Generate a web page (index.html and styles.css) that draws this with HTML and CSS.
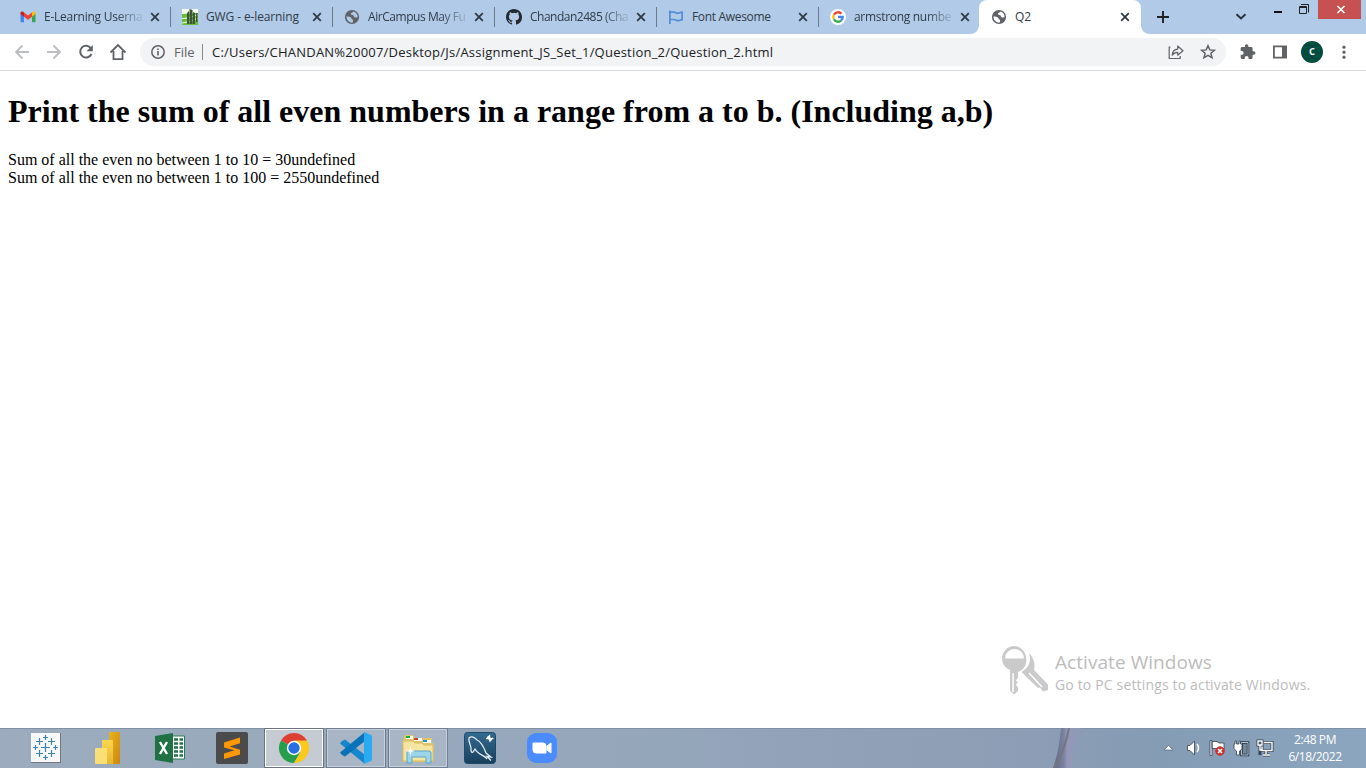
FILE: index.html
```html
<!DOCTYPE html>
<html lang="en">
<head>
<meta charset="utf-8">
<title>Q2</title>
<link rel="stylesheet" href="styles.css">
</head>
<body>
<svg class="defs" width="0" height="0">
  <symbol id="close" viewBox="0 0 10 10"><path d="M1.2 1.2l7.6 7.6M8.8 1.2L1.2 8.8" stroke="#303a45" stroke-width="1.8" fill="none"/></symbol>
  <symbol id="globe" viewBox="0 0 16 16"><circle cx="8" cy="8" r="7.1" fill="#5f6368"/><path d="M2.4 7.6c2 .2 3.600.1 4.500.9s.3 1.800 1.600 2.100c.8.2.7 1.600.2 3C5.200 14 2.600 11.300 2.400 7.600zM9.300 2.500C8.800 3.900 7 3.500 6.800 4.800 6.600 6 8.600 5.700 9.500 6.600c.7.8.3 1.900 1.700 2 1 .1 1.600-.5 2.400-.4C13.800 5.400 12 3.200 9.300 2.500z" fill="currentColor"/></symbol>
</svg>
<header class="tabstrip">
  <div class="tab">
    <svg class="fav" viewBox="0 0 16 16"><path d="M.5 4v8.300c0 .6.4 1 1 1H4V6.500z" fill="#4285f4"/><path d="M12 6.500v6.800h2.500c.6 0 1-.4 1-1V4z" fill="#34a853"/><path d="M12 3.500v4.200l3.500-2.600V4c0-1.500-1.600-2-2.600-1.200z" fill="#fbbc04"/><path d="M4 7.700V3.500l4 3 4-3v4.200l-4 3z" fill="#ea4335"/><path d="M.5 4v1.100L4 7.700V3.500l-.9-.7C2 2 .5 2.600.5 4z" fill="#c5221f"/></svg>
    <span class="title fade t1">E-Learning Userna</span><svg class="x"><use href="#close"/></svg>
  </div>
  <div class="tab">
    <svg class="fav" viewBox="0 0 16 16"><path d="M0 0h16v16H0z" fill="#f5faf0"/><path d="M0 5l16-1v12H0z" fill="#69bd3c"/><path d="M0 9.500c6 0 11-2 16-4M0 14c6-1 11-2 16-5" stroke="#e4f6d8" stroke-width="1.200" fill="none"/><path d="M5 4l2-2v13H5zM7.500 0l3 1v14h-3zM11 3l2 1v11h-2zM14 4h1.500v9H14z" fill="#3c5637"/></svg>
    <span class="title t2">GWG - e-learning</span><svg class="x"><use href="#close"/></svg>
  </div>
  <div class="tab"><svg class="fav"><use href="#globe"/></svg><span class="title fade t3">AirCampus May Fu</span><svg class="x"><use href="#close"/></svg></div>
  <div class="tab">
    <svg class="fav" viewBox="0 0 16 16"><path fill="#24292f" d="M8 0C3.580 0 0 3.580 0 8c0 3.540 2.290 6.530 5.470 7.590.4.070.550-.170.550-.380 0-.190-.010-.820-.010-1.490-2.010.370-2.530-.490-2.690-.940-.090-.230-.480-.940-.820-1.130-.280-.150-.680-.520-.010-.530.630-.010 1.080.580 1.230.820.720 1.210 1.870.870 2.330.660.070-.520.280-.870.510-1.070-1.780-.200-3.640-.890-3.640-3.950 0-.870.310-1.590.820-2.150-.080-.200-.360-1.020.080-2.120 0 0 .670-.210 2.200.820a7.600 7.600 0 0 1 4 0c1.530-1.040 2.200-.820 2.200-.820.440 1.100.160 1.920.080 2.120.510.560.820 1.270.820 2.150 0 3.070-1.870 3.750-3.650 3.950.290.250.540.730.540 1.480 0 1.070-.010 1.930-.010 2.200 0 .210.150.460.550.380A8.010 8.010 0 0 0 16 8c0-4.420-3.580-8-8-8z"/></svg>
    <span class="title fade t4">Chandan2485 (Cha</span><svg class="x"><use href="#close"/></svg>
  </div>
  <div class="tab"><svg class="fav" viewBox="0 0 16 16"><path d="M1.900 1.500v13.500M2 3.200h4.200c1.500 0 1.800 1.200 3.500 1.200 1.600 0 2.500-1.200 4.400-1.200v7.500c-1.700.1-2.700 1-4.400 1S7.500 10.500 6 10.500H2" fill="none" stroke="#538dd7" stroke-width="1.700"/></svg><span class="title t5">Font Awesome</span><svg class="x"><use href="#close"/></svg></div>
  <div class="tab last">
    <svg class="fav" viewBox="0 0 16 16"><circle cx="8" cy="8" r="8" fill="#fff"/><g fill="none" stroke-width="2.300"><path d="M3.900 5.800A4.700 4.700 0 0 1 11.400 4.600" stroke="#ea4335"/><path d="M3.900 5.800a4.700 4.700 0 0 0 0 4.400" stroke="#fbbc05"/><path d="M3.900 10.200a4.700 4.700 0 0 0 7.200 1.400" stroke="#34a853"/><path d="M11.100 11.600A4.700 4.700 0 0 0 12.700 8H8" stroke="#4285f4"/></g></svg>
    <span class="title fade t6">armstrong numbe</span><svg class="x"><use href="#close"/></svg>
  </div>
  <div class="tab active"><svg class="fav"><use href="#globe"/></svg><span class="title">Q2</span><svg class="x"><use href="#close"/></svg></div>
  <svg class="newtab" viewBox="0 0 12 12"><path d="M6 0v12M0 6h12" stroke="#202124" stroke-width="1.900"/></svg>
  <div class="winctl">
    <svg width="126" height="20" viewBox="0 0 126 20"><path d="M1.500 14.300L6 18.500l4.500-4.200" fill="none" stroke="#26313c" stroke-width="1.900"/><path d="M39 12h8" stroke="#111" stroke-width="2"/><path d="M66 4.500h7.500v8" fill="none" stroke="#222"/><path d="M64.500 6.500h7v7h-7zM64 7.500h8" fill="none" stroke="#222"/><path d="M83 0h45v19H83z" fill="#c75050"/><path d="M102.500 6l7 7M109.500 6l-7 7" stroke="#fff" stroke-width="1.600"/></svg>
  </div>
</header>
<nav class="toolbar">
  <svg class="navicons" width="126" height="36" viewBox="0 0 126 36"><g fill="none" stroke-width="1.800"><path d="M29 18H16M22.500 11.500L16 18l6.500 6.500M47 18h13M53.500 11.500L60 18l-6.500 6.500" stroke="#bbbdc0"/><path d="M91 14.300A5.900 5.900 0 1 0 91.500 20" stroke="#5f6368" stroke-width="2"/><path d="M110.500 18.500L118 11l7.500 7.500M113.500 17v8.200h9V17" stroke="#5f6368"/></g><path d="M92.800 11v6.300h-6.300z" fill="#5f6368"/></svg>
  <div class="omnibox">
    <svg width="14" height="14" viewBox="0 0 14 14"><circle cx="7" cy="7" r="6.200" fill="none" stroke="#5f6368" stroke-width="1.500"/><path d="M7 6v4.500M7 3.500v1.500" stroke="#5f6368" stroke-width="1.600"/></svg>
    <span class="file">File</span><span class="rule"></span><span class="url">C:/Users/CHANDAN%20007/Desktop/Js/Assignment_JS_Set_1/Question_2/Question_2.html</span>
    <svg class="share" width="50" height="18" viewBox="0 0 50 18"><path d="M2.500 4H1.200v11.500h11V13" fill="none" stroke="#5f6368" stroke-width="1.200"/><path d="M9.700 6.200V3L15 7.700l-5.300 4.500V9.300C7.500 9.200 5.600 10 4.200 12.200 4.500 8.800 6.200 6.500 9.700 6.200z" fill="none" stroke="#5f6368" stroke-width="1.200" stroke-linejoin="round"/><path d="M40 2.700l1.800 4.200 4.600.4-3.500 3 1.100 4.500-4-2.400-4 2.400 1.100-4.500-3.500-3 4.600-.4z" fill="none" stroke="#5f6368" stroke-width="1.500"/></svg>
  </div>
  <svg class="ext" width="50" height="18" viewBox="0 0 50 18"><path transform="translate(-.7 .5) scale(.7)" fill="#5f6368" d="M20.500 11H19V7c0-1.100-.9-2-2-2h-4V3.500a2.500 2.500 0 0 0-5 0V5H4c-1.100 0-2 .9-2 2v3.800h1.500a2.700 2.700 0 0 1 0 5.400H2V20c0 1.100.9 2 2 2h3.800v-1.500a2.700 2.700 0 0 1 5.400 0V22H17c1.100 0 2-.9 2-2v-4h1.500a2.500 2.500 0 0 0 0-5z"/><path d="M33.900 3.400h12.200v11.200H33.900z" fill="none" stroke="#5f6368" stroke-width="1.800"/><path d="M42 3h4v12h-4z" fill="#5f6368"/></svg>
  <span class="avatar">c</span>
  <svg width="4" height="16" viewBox="0 0 4 16"><g fill="#5f6368"><circle cx="2" cy="3.200" r="1.600"/><circle cx="2" cy="8.200" r="1.600"/><circle cx="2" cy="13.200" r="1.600"/></g></svg>
</nav>
<main class="page">
  <h1 class="question">Print the sum of all even numbers in a range from a to b. (Including a,b)</h1>
  <div class="r1">Sum of all the even no between 1 to 10 = 30undefined</div>
  <div class="r2">Sum of all the even no between 1 to 100 = 2550undefined</div>
  <aside class="watermark">
    <svg width="48" height="50" viewBox="0 0 48 50"><g fill="#cacaca"><path d="M27 7c5 5 6.500 11 5 17L46 38.500V44l-5 1.500-3-4-2 .5-15-14.500q-2-1-1-2.500c5.500-2 8-7 8-12.500z"/><path stroke="#fff" stroke-width="1.500" d="M12.500-.7C5-.7-.7 5.200-.7 12.500c0 5.500 3.200 10 8 12V45l5 4.500 4.500-4.500v-4l-2-2 2-2.500-2-2 2-2.500v-5.500c5-2 8.300-6.500 8.300-12C25.100 5.200 19.500-.7 12.500-.7z"/></g><path d="M3 12.500a9.300 9.300 0 0 1 19 0zM10.300 27h1.500v19h-1.500z" fill="#fff"/><path d="M27 27l13 14" stroke="#fff" stroke-width="1.500"/></svg>
    <div><div class="wt">Activate Windows</div><div class="ws">Go to PC settings to activate Windows.</div></div>
  </aside>
</main>
<footer class="taskbar">
  <div class="app"><svg viewBox="0 0 32 32"><path d="M1 1h30v30H1z" fill="#70777e"/><path d="M1 1h29v29H1z" fill="#f8f8f8"/><path d="M15.500 11v9M11 15.500h9M9.500 6v7M6 9.500h7M21.500 6v7M18 9.500h7M9.500 18v7M6 21.500h7M21.500 18v7M18 21.500h7M15.500 3v5M13 5.500h5M15.500 23v5M13 25.500h5M5.500 13v5M3 15.500h5M25.500 13v5M23 15.500h5" stroke="#3f82ad" stroke-width="1.200"/></svg></div>
  <div class="app"><svg viewBox="0 0 32 32"><defs><linearGradient id="pb" x2="1" y2="1"><stop stop-color="#e9b51f"/><stop offset="1" stop-color="#cc840d"/></linearGradient><linearGradient id="pb2" x2="0" y2="1"><stop stop-color="#f8d64d"/><stop offset="1" stop-color="#e7b62d"/></linearGradient></defs><rect x="17" width="11" height="32" rx="1" fill="url(#pb)"/><path d="M11 8h9q1 0 1 1v23H10V9q0-1 1-1z" fill="url(#pb2)"/><path d="M4 16h10q1 0 1 1v15H4q-1 0-1-1V17q0-1 1-1z" fill="#f9df75"/></svg></div>
  <div class="app"><svg viewBox="0 0 32 32"><path d="M18 4h12.500v23H18z" fill="#fff" stroke="#247c50"/><path d="M20 7.500h4M20 11.500h4M20 15.500h4M20 19.500h4M20 23.500h4M25.500 7.500H29M25.500 11.500H29M25.500 15.500H29M25.500 19.500H29M25.500 23.500H29" stroke="#217346" stroke-width="2.500"/><path d="M1 4l18-3v30L1 28z" fill="#207245"/><path d="M6 10l7 12M13 10L6 22" stroke="#fff" stroke-width="2.400"/></svg></div>
  <div class="app"><svg viewBox="0 0 32 32"><rect width="32" height="32" rx="2" fill="#4b4b4b"/><path d="M8 10.500l16-5v5.700L13.500 14.500 24 17.700v4.800L8 27v-5.500l10.500-3.200L8 15.500z" fill="#ff9800"/></svg></div>
  <div class="app open current"><svg viewBox="0 0 32 32"><path d="M16 16L3 8.500A15 15 0 0 1 29 8.500z" fill="#df4034"/><path d="M16 16L3 8.500A15 15 0 0 0 16 31l6.500-11z" fill="#269e4b"/><path d="M16 16l6.500 4L16 31A15 15 0 0 0 29 8.500H16z" fill="#fbc91b"/><circle cx="16" cy="16" r="7.200" fill="#fff"/><circle cx="16" cy="16" r="5.700" fill="#276fe0"/></svg></div>
  <div class="app open"><svg viewBox="0 0 32 32"><path d="M2 9l3-1.500L25 23v9L0 11.500z" fill="#1686ce"/><path d="M2 23l3 1.500L25 9V0L0 20.500z" fill="#0873b8"/><path d="M24 0l8 3.500v25L24 32z" fill="#2aaaf0"/></svg></div>
  <div class="app open"><svg viewBox="0 0 32 32"><path d="M1 8l2-5h8l2 3h17v5l2 1-1 18H1z" fill="#e3c56a"/><path d="M4 4h7v3H4zM12 6h8v3h-8zM21 8h8v3h-8z" fill="#fff"/><path d="M4 4h4v2H4z" fill="#17af32"/><path d="M12 6h4v2h-4z" fill="#d24325"/><path d="M21 8h4v2h-4z" fill="#2693df"/><path d="M1 9h10l2 2h7l2 2h9v16H1z" fill="#f6e5a0" stroke="#d7bc65"/><path d="M5 31V21q0-2 2-2h20q2 0 2 2v10h-5v-6H10v6z" fill="#9bd5ea" stroke="#5ba7c8"/><path d="M8.500 14l1 4 3.500 1-3.500 1-1 4-1-4-3.500-1 3.500-1z" fill="#fff"/></svg></div>
  <div class="app"><svg viewBox="0 0 32 32"><defs><linearGradient id="my" x2="0" y2="1"><stop stop-color="#346b91"/><stop offset="1" stop-color="#173f5d"/></linearGradient></defs><rect x=".5" y=".5" width="31" height="31" rx="3" fill="url(#my)" stroke="#204967"/><path d="M9 20c-1 1-2 0-2-2 1-3-3-8-2-12 2-2 6-1 8 2 5 2 7 8 9 13l5 4-4-.5 4 4M9 20l2-3c3 6 10 6 12 10" fill="none" stroke="#e3edf2" stroke-width="1.300"/><path d="M23.500 4.500l4 4" stroke="#fff" stroke-width="2.600"/><path d="M22 6.500q2 .5 3-.5t.5-3M26 10q-.5-2 .5-3t3-.5" fill="none" stroke="#fff" stroke-width="1.200"/></svg></div>
  <div class="app"><svg viewBox="0 0 32 32"><rect x="1" y="1" width="30" height="30" rx="9" fill="#4a8cff"/><path d="M7 11h10q3 0 3 3v7H10q-3 0-3-3zM21 14l4-3v10l-4-3z" fill="#fff" stroke="#fff" stroke-linejoin="round"/></svg></div>
  <svg class="streak" width="40" height="40" viewBox="0 0 40 40"><defs><linearGradient id="sk"><stop stop-color="#5f6880"/><stop offset=".4" stop-color="#7b83a0"/><stop offset=".5" stop-color="#9497b8"/><stop offset="1" stop-color="#8f9bb8"/></linearGradient></defs><path d="M13 0h20q-7 18-10 40H5q6-16 8-40z" fill="url(#sk)"/><path d="M21 0Q17 22 6 40" fill="none" stroke="#777482" stroke-width="2"/></svg>
  <svg class="tray" width="114" height="20" viewBox="0 0 114 20"><path d="M4 12l4.500-4.500L13 12z" fill="#fff" stroke="#49576a" stroke-width=".6"/><g stroke="#354354" stroke-width=".8" fill="#fff"><path d="M27.500 7.500h2.500L34.500 3v14L30 12.500h-2.500z"/><path d="M37 6q3 4 0 8" fill="none" stroke="#fff" stroke-width="1.500"/><path d="M50 2.500h2v15h-2zM52 3.500h5l2 1.500h5v7h-5l-2-1.500h-5z"/><circle cx="60" cy="13" r="4.300" fill="#d82b24" stroke="#b8302c"/><path d="M58 11l4 4M62 11l-4 4" stroke="#fff" stroke-width="1.700"/><path d="M81.500 4.500h6.500v12.500h-6.500z" fill="#73869b" stroke="#25374b" stroke-width="2.500"/><path d="M81.500 4.500h6.500v12.500h-6.500z" fill="none" stroke="#dce5ed"/><path d="M75 3h1.500v3H79V3h1.500v3H82v5l-2.500 2v4h-3v-4L74 11V6h1z"/></g><g fill="none" stroke="#354354" stroke-width="3"><path d="M104 4.500h8v8H102v-4M106 13v3M103 17h7M98 3h4v4h-4zM100 7v10"/></g><g fill="none" stroke="#fff" stroke-width="1.400"><path d="M104 4.500h8v8H102v-4M106 13v3M103 17h7M98 3h4v4h-4zM100 7v5h2"/></g></svg>
  <div class="clock"><div class="time">2:48 PM</div><div class="date">6/18/2022</div></div>
</footer>
</body>
</html>
```
FILE: styles.css
```css
* { box-sizing: border-box; }
html, body { height: 100%; overflow: hidden; }
body { margin: 0; display: flex; flex-direction: column; background: #fff; font-family: "Open Sans", "Noto Sans", sans-serif; }
svg { display: block; flex: none; }
.defs { position: absolute; }
.tabstrip { height: 34px; flex: none; display: flex; background: #b0cae7; padding-left: 9px; }
.tab { width: 162px; height: 34px; flex: none; display: flex; align-items: center; padding: 0 0 0 11px; background: linear-gradient(#6c7a8a, #6c7a8a) 100% 7px / 1px 20px no-repeat; }
.tab.last { width: 160px; background: none; }
.fav { width: 16px; height: 16px; margin-right: 8px; color: #b0cae7; }
.title { width: 98px; margin-right: 8px; white-space: nowrap; font-size: 12px; line-height: 20px; color: #303c48; }
.t1 { letter-spacing: -.25px; }
.t2 { letter-spacing: -.12px; }
.t3 { letter-spacing: -.45px; }
.t4 { letter-spacing: -.5px; }
.t5 { letter-spacing: -.33px; }
.t6 { letter-spacing: -.3px; }
.fade { mask-image: linear-gradient(90deg, #000 72px, transparent 102px); }
.x { width: 10px; height: 10px; }
.active { background: #fff; border-radius: 8px 8px 0 0; position: relative; padding-left: 12px; }
.active .title { margin-right: 7px; }
.active::before, .active::after { content: ""; position: absolute; bottom: 0; width: 8px; height: 8px; }
.active::before { left: -8px; background: radial-gradient(circle at 0 0, transparent 7.5px, #fff 8px); }
.active::after { right: -8px; background: radial-gradient(circle at 100% 0, transparent 7.5px, #fff 8px); }
.active .fav { color: #fff; }
.newtab { width: 12px; height: 12px; margin: 11px 0 0 16px; }
.winctl { margin-left: auto; padding-right: 5px; }
.toolbar { height: 37px; flex: none; display: flex; align-items: center; border-bottom: 1px solid #d9dadc; padding-right: 20px; }
.omnibox { width: 1086px; height: 28px; margin-left: 14px; padding: 0 8px 0 11px; display: flex; align-items: center; border-radius: 14px; background: #f1f3f4; font-size: 13px; line-height: 20px; color: #202124; flex: none; }
.file { width: 22px; margin-left: 9px; color: #5f6368; }
.rule { width: 1px; height: 16px; margin: 0 9px 0 6px; background: #858a8f; }
.url { white-space: nowrap; letter-spacing: .22px; }
.share { margin-left: auto; }
.ext { margin-left: 14px; }
.avatar { width: 22px; height: 22px; margin: 0 19px 0 auto; border-radius: 50%; background: #004d40; color: #fff; font: 600 12px/20px "Open Sans", sans-serif; text-align: center; }
.page { flex: 1; min-height: 0; padding: 21px 8px 0; font: 16px/18px "Liberation Serif", serif; color: #000; position: relative; }
.question { margin: 0 0 21px; font-size: 32px; line-height: 38px; white-space: nowrap; }
.r1, .r2 { white-space: nowrap; }
.watermark { position: absolute; left: 1002px; top: 575px; display: flex; gap: 5px; font-family: "Open Sans", sans-serif; color: #bcbcbc; white-space: nowrap; }
.wt { font-size: 19px; line-height: 26px; padding-top: 3px; letter-spacing: .06px; }
.ws { font-size: 14px; line-height: 20px; letter-spacing: .16px; }
.taskbar { height: 40px; flex: none; display: flex; align-items: center; padding-left: 15px; box-shadow: inset 0 1px #8191a5; background: linear-gradient(90deg, #9cacbe 0, #94a6ba 50%, #8d9db5 75%, #849cb4 85%, #8ca6bf 100%); }
.app { width: 60px; height: 40px; margin: 0 1px; flex: none; display: grid; place-items: center; }
.app svg { width: 32px; height: 32px; }
.open { border: 1px solid #6f7e92; box-shadow: inset 0 0 0 1px #c7d0db; background: #a7b5c4; }
.current { border-color: #6b7480; box-shadow: inset 0 0 0 1px #fff; background: #c4cbd3; }
.streak { margin-left: 475px; }
.tray { margin-left: 72px; }
.clock { width: 60px; margin-left: 11px; text-align: center; color: #fff; font-size: 12px; line-height: 17px; letter-spacing: -.4px; white-space: nowrap; }
```
